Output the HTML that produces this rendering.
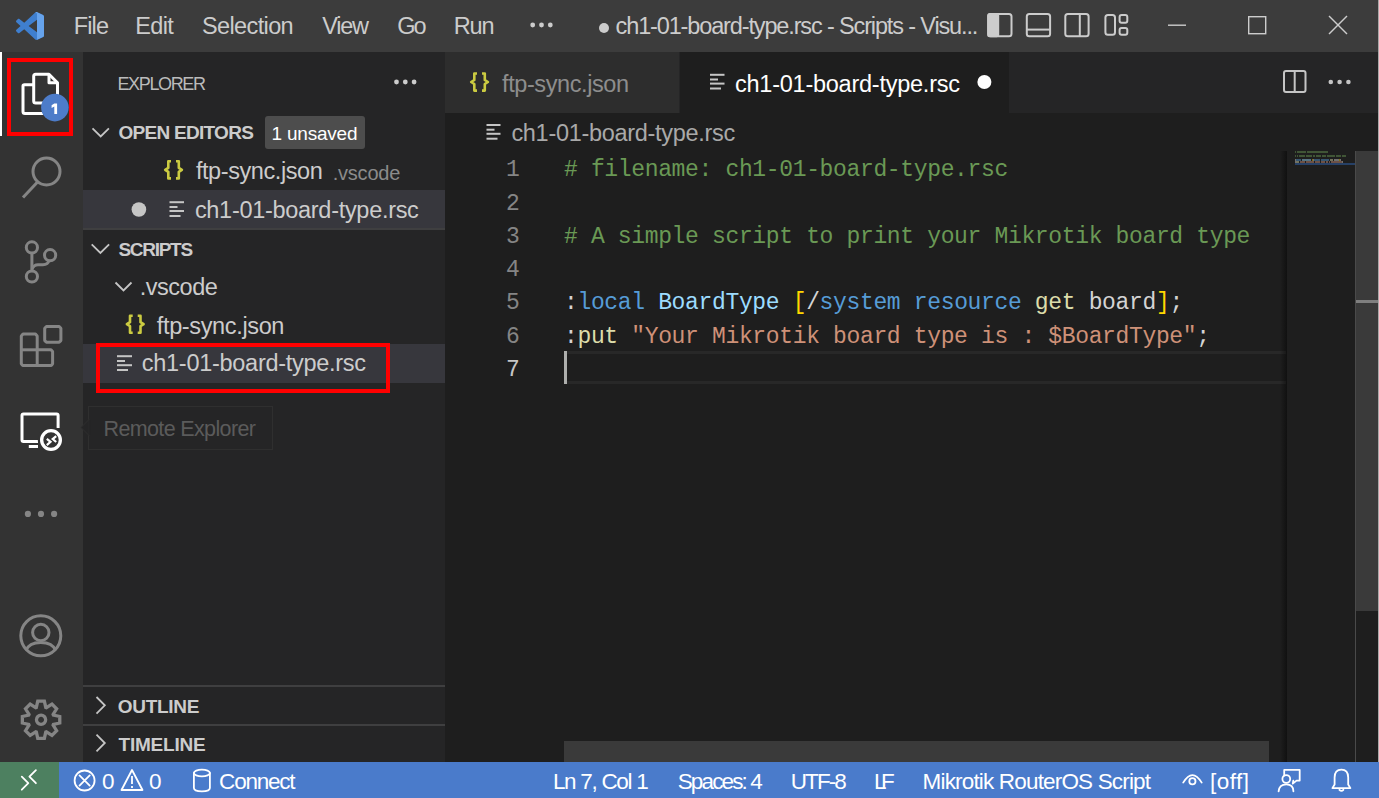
<!DOCTYPE html>
<html><head><meta charset="utf-8">
<style>
html,body{margin:0;padding:0;width:1379px;height:798px;overflow:hidden;background:#1e1e1e;font-family:"Liberation Sans",sans-serif}
.a{position:absolute}
.t{position:absolute;line-height:0;white-space:pre}
svg{position:absolute;overflow:visible}
</style></head><body>
<!-- title bar -->
<div class="a" style="left:0;top:0;width:1379px;height:52px;background:#3c3c3c"></div>
<!-- activity bar -->
<div class="a" style="left:0;top:52px;width:83px;height:710px;background:#333333"></div>
<!-- sidebar -->
<div class="a" style="left:83px;top:52px;width:362px;height:710px;background:#252526"></div>
<!-- tabs bar -->
<div class="a" style="left:445px;top:52px;width:934px;height:61px;background:#252526"></div>
<div class="a" style="left:445px;top:52px;width:234px;height:61px;background:#2d2d2d"></div>
<div class="a" style="left:680px;top:52px;width:329px;height:61px;background:#1e1e1e"></div>
<!-- editor -->
<div class="a" style="left:445px;top:113px;width:934px;height:649px;background:#1e1e1e"></div>
<!-- status bar -->
<div class="a" style="left:0;top:762px;width:1379px;height:36px;background:#4a7bcb"></div>
<div class="a" style="left:0;top:762px;width:59px;height:36px;background:#4d8060"></div>

<!-- sidebar selected rows -->
<div class="a" style="left:83px;top:190px;width:362px;height:38px;background:#37373d"></div>
<div class="a" style="left:83px;top:344px;width:362px;height:39px;background:#37373d"></div>
<!-- badge 1 unsaved -->
<div class="a" style="left:265px;top:116px;width:100px;height:33px;background:#4d4d4d;border-radius:3px"></div>
<!-- section borders -->
<div class="a" style="left:83px;top:685px;width:362px;height:2px;background:#3f3f40"></div>
<div class="a" style="left:83px;top:228px;width:362px;height:2px;background:#3f3f40"></div>
<div class="a" style="left:83px;top:724px;width:362px;height:2px;background:#3f3f40"></div>

<!-- current line highlight -->
<div class="a" style="left:564px;top:351px;width:722px;height:27px;border-top:3px solid #282828;border-bottom:3px solid #282828"></div>
<!-- cursor -->
<div class="a" style="left:564px;top:351px;width:3px;height:33px;background:#aeafad"></div>

<!-- minimap shadow -->
<div class="a" style="left:1280px;top:151px;width:7px;height:611px;background:linear-gradient(to right,rgba(0,0,0,0),rgba(0,0,0,0.45))"></div>
<!-- vertical scrollbar -->
<div class="a" style="left:1355px;top:151px;width:1px;height:611px;background:#4a4a4a"></div>
<div class="a" style="left:1356px;top:151px;width:22px;height:460px;background:#3a3a3a"></div>
<div class="a" style="left:1356px;top:300px;width:22px;height:3px;background:#7f7f7f"></div>
<!-- horizontal scrollbar -->
<div class="a" style="left:564px;top:741px;width:705px;height:21px;background:#3a3a3a"></div>
<!-- minimap content -->
<div class="a" style="left:1295px;top:163px;width:60px;height:2px;background:#264066"></div>
<div class="a" style="left:1295px;top:151px;width:1px;height:1.6px;background:#6a9955;opacity:0.45"></div>
<div class="a" style="left:1297px;top:151px;width:9px;height:1.6px;background:#6a9955;opacity:0.45"></div>
<div class="a" style="left:1307px;top:151px;width:21px;height:1.6px;background:#6a9955;opacity:0.45"></div>
<div class="a" style="left:1295px;top:155px;width:1px;height:1.6px;background:#6a9955;opacity:0.45"></div>
<div class="a" style="left:1297px;top:155px;width:1px;height:1.6px;background:#6a9955;opacity:0.45"></div>
<div class="a" style="left:1299px;top:155px;width:6px;height:1.6px;background:#6a9955;opacity:0.45"></div>
<div class="a" style="left:1306px;top:155px;width:6px;height:1.6px;background:#6a9955;opacity:0.45"></div>
<div class="a" style="left:1313px;top:155px;width:2px;height:1.6px;background:#6a9955;opacity:0.45"></div>
<div class="a" style="left:1316px;top:155px;width:5px;height:1.6px;background:#6a9955;opacity:0.45"></div>
<div class="a" style="left:1322px;top:155px;width:4px;height:1.6px;background:#6a9955;opacity:0.45"></div>
<div class="a" style="left:1327px;top:155px;width:8px;height:1.6px;background:#6a9955;opacity:0.45"></div>
<div class="a" style="left:1336px;top:155px;width:5px;height:1.6px;background:#6a9955;opacity:0.45"></div>
<div class="a" style="left:1342px;top:155px;width:4px;height:1.6px;background:#6a9955;opacity:0.45"></div>
<div class="a" style="left:1295px;top:159px;width:1px;height:1.6px;background:#d4d4d4;opacity:0.45"></div>
<div class="a" style="left:1296px;top:159px;width:5px;height:1.6px;background:#569cd6;opacity:0.45"></div>
<div class="a" style="left:1302px;top:159px;width:9px;height:1.6px;background:#9cdcfe;opacity:0.45"></div>
<div class="a" style="left:1312px;top:159px;width:1px;height:1.6px;background:#ffd700;opacity:0.45"></div>
<div class="a" style="left:1313px;top:159px;width:1px;height:1.6px;background:#d4d4d4;opacity:0.45"></div>
<div class="a" style="left:1314px;top:159px;width:6px;height:1.6px;background:#569cd6;opacity:0.45"></div>
<div class="a" style="left:1321px;top:159px;width:8px;height:1.6px;background:#569cd6;opacity:0.45"></div>
<div class="a" style="left:1330px;top:159px;width:3px;height:1.6px;background:#dcdcaa;opacity:0.45"></div>
<div class="a" style="left:1334px;top:159px;width:5px;height:1.6px;background:#d4d4d4;opacity:0.45"></div>
<div class="a" style="left:1339px;top:159px;width:1px;height:1.6px;background:#ffd700;opacity:0.45"></div>
<div class="a" style="left:1340px;top:159px;width:1px;height:1.6px;background:#d4d4d4;opacity:0.45"></div>
<div class="a" style="left:1295px;top:161px;width:1px;height:1.6px;background:#d4d4d4;opacity:0.45"></div>
<div class="a" style="left:1296px;top:161px;width:3px;height:1.6px;background:#dcdcaa;opacity:0.45"></div>
<div class="a" style="left:1300px;top:161px;width:5px;height:1.6px;background:#ce9178;opacity:0.45"></div>
<div class="a" style="left:1306px;top:161px;width:8px;height:1.6px;background:#ce9178;opacity:0.45"></div>
<div class="a" style="left:1315px;top:161px;width:5px;height:1.6px;background:#ce9178;opacity:0.45"></div>
<div class="a" style="left:1321px;top:161px;width:4px;height:1.6px;background:#ce9178;opacity:0.45"></div>
<div class="a" style="left:1326px;top:161px;width:2px;height:1.6px;background:#ce9178;opacity:0.45"></div>
<div class="a" style="left:1329px;top:161px;width:1px;height:1.6px;background:#ce9178;opacity:0.45"></div>
<div class="a" style="left:1331px;top:161px;width:11px;height:1.6px;background:#ce9178;opacity:0.45"></div>
<div class="a" style="left:1342px;top:161px;width:1px;height:1.6px;background:#d4d4d4;opacity:0.45"></div>
<!-- tooltip -->
<div class="a" style="left:88px;top:406px;width:183px;height:42px;border:1px solid #2f2f2f;background:#252526"></div>
<svg style="left:0;top:0" width="1379" height="798"><path d="M81 427.5 L89 419.5 L89 435.5 Z" fill="#252526" stroke="#2f2f2f" stroke-width="1"/><path d="M89.5 420 L89.5 435" stroke="#252526" stroke-width="1.5"/></svg>

<div class="a" style="left:1378px;top:0;width:1px;height:762px;background:#a8a8a8"></div>
<!-- ===== ICONS ===== -->
<svg style="left:0;top:0" width="1379" height="798">
  <!-- vscode logo -->
  <g transform="translate(16,12) scale(0.28)">
    <path fill="#3f7fcf" fill-rule="evenodd" d="M70.9 99.3c1.6.6 3.4.6 5-.2l20.6-9.9c2.2-1 3.5-3.2 3.5-5.6V16.4c0-2.4-1.4-4.6-3.5-5.6L75.9.9c-2.1-1-4.5-.8-6.4.6-.3.2-.5.4-.7.6L29.4 38 12.2 25c-1.6-1.2-3.8-1.1-5.3.2l-5.5 5c-1.8 1.7-1.8 4.5 0 6.2L16.2 50 1.4 63.6c-1.8 1.7-1.8 4.5 0 6.2l5.5 5c1.5 1.4 3.7 1.5 5.3.2l17.2-13 39.4 35.9c.6.6 1.4 1.1 2.1 1.4zM75 27.3 45.1 50 75 72.7V27.3z"/>
    <path fill="#6aa7ee" d="M75.9 99.1 96.5 89.2c2.2-1 3.5-3.2 3.5-5.6V16.4c0-2.4-1.4-4.6-3.5-5.6L75.9.9c-2.1-1-4.5-.8-6.4.6L75 5v90z" opacity="0.9"/>
  </g>
  <!-- menu more -->
  <g fill="#cccccc"><circle cx="532.7" cy="25" r="2.4"/><circle cx="541.5" cy="25" r="2.4"/><circle cx="550.3" cy="25" r="2.4"/></g>
  <!-- title dirty dot -->
  <circle cx="604" cy="28" r="5" fill="#cccccc"/>
  <!-- layout icons -->
  <g fill="none" stroke="#cccccc" stroke-width="2">
    <rect x="988.2" y="13.9" width="23.3" height="22.4" rx="2.5"/>
    <rect x="988.2" y="13.9" width="10" height="22.4" rx="1.5" fill="#cccccc"/>
    <rect x="1026.8" y="13.9" width="23.3" height="22.4" rx="2.5"/>
    <line x1="1027" y1="29.6" x2="1050" y2="29.6"/>
    <rect x="1065.3" y="13.9" width="23.3" height="22.4" rx="2.5"/>
    <line x1="1079.8" y1="14" x2="1079.8" y2="36"/>
    <rect x="1105.4" y="15" width="9.6" height="19.7" rx="2.5"/>
    <rect x="1119.6" y="15" width="7.7" height="7.8" rx="2"/>
    <rect x="1119.6" y="27.9" width="7.7" height="6.8" rx="2"/>
  </g>
  <!-- window controls -->
  <g fill="none" stroke="#cccccc" stroke-width="1.4">
    <line x1="1168" y1="25.2" x2="1186" y2="25.2"/>
    <rect x="1248.7" y="16.7" width="17" height="17"/>
    <line x1="1329" y1="16" x2="1347" y2="34"/>
    <line x1="1347" y1="16" x2="1329" y2="34"/>
  </g>
  <!-- right edge strip -->
  <!-- activity bar: active indicator -->
  <rect x="0" y="52" width="2" height="84" fill="#ffffff"/>
  <!-- files icon -->
  <g fill="none" stroke="#ffffff" stroke-width="3" stroke-linejoin="round">
    <path d="M23 86 Q23 84.7 24.5 84.7 L33.7 84.7 M23 86 L23 111.5 Q23 113.5 25 113.5 L43 113.5"/>
    <path d="M35.7 74.3 L49 74.3 L57.5 82.8 L57.5 101 Q57.5 103 55.5 103 L35.7 103 Q33.7 103 33.7 101 L33.7 76.3 Q33.7 74.3 35.7 74.3 Z"/>
    <path d="M49 74.3 L49 82.8 L57.5 82.8"/>
  </g>
  <circle cx="54.9" cy="107.6" r="13.8" fill="#4d7cc9"/>
  <path d="M54.3 103.4 L57.1 103.4 L57.1 113.9 L54.3 113.9 L54.3 106.6 L51.6 107.9 L51.6 105.3 Z" fill="#ffffff"/>
  <!-- red box explorer -->
  <rect x="9" y="60" width="62" height="74" fill="none" stroke="#ff0000" stroke-width="4"/>
  <!-- search -->
  <g fill="none" stroke="#858585" stroke-width="3">
    <circle cx="46.5" cy="171.5" r="13.5"/>
    <line x1="37.5" y1="182" x2="23" y2="197.5"/>
  </g>
  <!-- scm -->
  <g fill="none" stroke="#858585" stroke-width="3">
    <circle cx="31.9" cy="247.4" r="5.6"/>
    <circle cx="31.9" cy="276.5" r="5.6"/>
    <circle cx="50.1" cy="255.2" r="5.6"/>
    <line x1="31.9" y1="253" x2="31.9" y2="271"/>
    <path d="M31.9 269 Q34 264.7 38 264.7 L43 264.7 Q48 264.7 49 260.5"/>
  </g>
  <!-- extensions -->
  <g fill="none" stroke="#858585" stroke-width="3" stroke-linejoin="bevel">
    <path d="M21.3 336 L23 334.1 L35.5 334.1 L37.2 336 L37.2 349.8 L51 349.8 L52.6 351.5 L52.6 364 L51 365.6 L23 365.6 L21.3 364 Z"/>
    <line x1="21.3" y1="349.8" x2="37.2" y2="349.8"/>
    <line x1="37.2" y1="349.8" x2="37.2" y2="365.6"/>
    <path d="M44.7 328.2 L46.4 326.5 L59.2 326.5 L60.9 328.2 L60.9 340.6 L59.2 342.2 L46.4 342.2 L44.7 340.6 Z"/>
  </g>
  <!-- remote explorer -->
  <g fill="none" stroke="#ffffff" stroke-width="3">
    <path d="M38.5 441.4 L23.5 441.4 Q22 441.4 22 440 L22 415.4 Q22 413.9 23.5 413.9 L56.6 413.9 Q58.1 413.9 58.1 415.4 L58.1 428"/>
    <line x1="28.8" y1="446.5" x2="38" y2="446.5"/>
  </g>
  <circle cx="51" cy="440" r="13.2" fill="#333333"/>
  <circle cx="51" cy="440" r="9.35" fill="none" stroke="#ffffff" stroke-width="3.3"/>
  <g fill="none" stroke="#ffffff" stroke-width="2.2">
    <path d="M46.8 438.9 L50.5 441.9 L46.8 445.1"/>
    <path d="M56.2 436.1 L52.7 439.1 L56.2 442"/>
  </g>
  <!-- more dots -->
  <g fill="#858585"><circle cx="27.9" cy="513.9" r="3.1"/><circle cx="41" cy="513.9" r="3.1"/><circle cx="54.1" cy="513.9" r="3.1"/></g>
  <!-- account -->
  <g fill="none" stroke="#858585" stroke-width="3">
    <circle cx="40.8" cy="635.8" r="20"/>
    <circle cx="40.8" cy="632.5" r="8.2"/>
    <path d="M26 650.5 Q29 642.5 40.8 642.5 Q52.6 642.5 55.6 650.5"/>
  </g>
  <!-- gear -->
  <g transform="translate(41.06,719.75)" fill="none" stroke="#858585" stroke-width="3.3" stroke-linejoin="miter">
    <path d="M-4.73 -12.32 L-3.30 -18.71 L3.30 -18.71 L4.73 -12.32 L5.37 -12.06 L10.90 -15.56 L15.56 -10.90 L12.06 -5.37 L12.32 -4.73 L18.71 -3.30 L18.71 3.30 L12.32 4.73 L12.06 5.37 L15.56 10.90 L10.90 15.56 L5.37 12.06 L4.73 12.32 L3.30 18.71 L-3.30 18.71 L-4.73 12.32 L-5.37 12.06 L-10.90 15.56 L-15.56 10.90 L-12.06 5.37 L-12.32 4.73 L-18.71 3.30 L-18.71 -3.30 L-12.32 -4.73 L-12.06 -5.37 L-15.56 -10.90 L-10.90 -15.56 L-5.37 -12.06 Z"/>
    <circle cx="0" cy="0" r="4.6"/>
  </g>

  <!-- sidebar: explorer more -->
  <g fill="#cccccc"><circle cx="396.5" cy="82" r="2.4"/><circle cx="405.3" cy="82" r="2.4"/><circle cx="414.1" cy="82" r="2.4"/></g>
  <!-- chevrons -->
  <g fill="none" stroke="#c5c5c5" stroke-width="1.8">
    <path d="M92.5 128.3 L100.7 136.5 L108.9 128.3"/>
    <path d="M91.7 244.3 L100.4 253 L109.1 244.3"/>
    <path d="M115.5 282.5 L123.5 290.5 L131.5 282.5"/>
    <path d="M96.5 697 L104.8 705.3 L96.5 713.6"/>
    <path d="M96.5 734.7 L104.8 743 L96.5 751.3"/>
  </g>
  <!-- json brace icons -->
  <defs><g id="br" fill="none" stroke="#cbcb41" stroke-width="2.6" stroke-linejoin="round">
    <path d="M171 161.3 L168.3 161.3 L168.3 167.8 L165.2 169.8 L168.3 171.8 L168.3 178.4 L171 178.4"/>
    <path d="M176 161.3 L178.8 161.3 L178.8 167.8 L181.9 169.8 L178.8 171.8 L178.8 178.4 L176 178.4"/>
  </g></defs>
  <use href="#br"/>
  <use href="#br" transform="translate(-38.3,154.4)"/>
  <use href="#br" transform="translate(306,-87.8)"/>
  <!-- dirty dot in open editors -->
  <circle cx="138.9" cy="209.5" r="7.3" fill="#c5c5c5"/>
  <!-- lines icons -->
  <g fill="#c5c5c5">
    <rect x="169.5" y="201.2" width="14.5" height="2"/><rect x="169.5" y="206" width="8" height="2"/><rect x="169.5" y="210" width="14.5" height="2"/><rect x="169.5" y="215" width="11" height="2"/>
    <rect x="117" y="355.2" width="15" height="2"/><rect x="117" y="360" width="8" height="2"/><rect x="117" y="364.2" width="15" height="2"/><rect x="117" y="369" width="11" height="2"/>
    <rect x="486.5" y="124" width="14" height="2"/><rect x="486.5" y="128.7" width="8" height="2"/><rect x="486.5" y="132.8" width="14" height="2"/><rect x="486.5" y="137.7" width="11" height="2"/>
  </g>
  <g fill="#c5c5c5">
    <rect x="710" y="73.8" width="14.5" height="2"/><rect x="710" y="78.5" width="8" height="2"/><rect x="710" y="82.6" width="14.5" height="2"/><rect x="710" y="87.5" width="11" height="2"/>
  </g>
  <!-- red box scripts -->
  <rect x="98" y="345" width="290" height="46" fill="none" stroke="#ff0000" stroke-width="4"/>
  <!-- tab dirty dot -->
  <circle cx="984.4" cy="82" r="7" fill="#ffffff"/>
  <!-- split editor / more -->
  <g fill="none" stroke="#c5c5c5" stroke-width="2">
    <rect x="1284" y="71" width="21.5" height="21" rx="2"/>
    <line x1="1294.7" y1="71" x2="1294.7" y2="92"/>
  </g>
  <g fill="#c5c5c5"><circle cx="1330.8" cy="82" r="2.3"/><circle cx="1339.6" cy="82" r="2.3"/><circle cx="1348.4" cy="82" r="2.3"/></g>

  <!-- status bar icons -->
  <g fill="none" stroke="#ffffff" stroke-width="1.8" stroke-linecap="round" stroke-linejoin="round">
    <path d="M21.8 776.6 L28.3 783.2 L21.8 789.7"/>
    <path d="M35.9 770.2 L29.4 776.7 L35.9 783.2"/>
    <circle cx="84.6" cy="780.5" r="10"/>
    <path d="M79.5 775.4 L89.7 785.6 M89.7 775.4 L79.5 785.6"/>
    <path d="M132 770 L142.5 790 L121.5 790 Z"/>
    <ellipse cx="201.9" cy="773" rx="8" ry="3.3"/>
    <path d="M193.9 773 L193.9 788 Q193.9 791.3 201.9 791.3 Q209.9 791.3 209.9 788 L209.9 773"/>
    <path d="M1183.2 782.6 Q1192.4 767.5 1201.7 782.6"/>
    <circle cx="1192.4" cy="781.2" r="3.1"/>
    <path d="M1284.2 775.5 L1284.2 769.9 L1299.7 769.9 L1299.7 780.6 L1296.5 780.6 L1292.8 783.6 L1293.3 780.6"/>
    <circle cx="1286.3" cy="779" r="3.9"/>
    <path d="M1278.6 791.3 Q1279.2 784.3 1286.3 784.3 Q1293.4 784.3 1293.4 791.3"/>
    <path d="M1332.4 788.1 L1350.4 788.1 L1348.2 784.5 L1348.2 777.5 Q1348.2 769.6 1341.4 769.6 Q1334.6 769.6 1334.6 777.5 L1334.6 784.5 Z"/>
    <path d="M1339.4 789.8 Q1341.4 792 1343.4 789.8"/>
  </g>
  <g fill="#ffffff">
    <rect x="131.1" y="776" width="1.8" height="8"/>
    <rect x="131.1" y="786" width="1.8" height="2"/>
  </g>
</svg>

<div class="t" style="left:73.70px;top:26.46px;font-family:'Liberation Sans';font-size:23.5px;font-weight:400;color:#cccccc;letter-spacing:-0.833px;">File</div>
<div class="t" style="left:135.30px;top:26.46px;font-family:'Liberation Sans';font-size:23.5px;font-weight:400;color:#cccccc;letter-spacing:-0.633px;">Edit</div>
<div class="t" style="left:202.00px;top:26.46px;font-family:'Liberation Sans';font-size:23.5px;font-weight:400;color:#cccccc;letter-spacing:-0.625px;">Selection</div>
<div class="t" style="left:322.20px;top:26.46px;font-family:'Liberation Sans';font-size:23.5px;font-weight:400;color:#cccccc;letter-spacing:-1.233px;">View</div>
<div class="t" style="left:397.30px;top:26.46px;font-family:'Liberation Sans';font-size:23.5px;font-weight:400;color:#cccccc;letter-spacing:-2.000px;">Go</div>
<div class="t" style="left:453.80px;top:26.46px;font-family:'Liberation Sans';font-size:23.5px;font-weight:400;color:#cccccc;letter-spacing:-1.200px;">Run</div>
<div class="t" style="left:615.60px;top:26.46px;font-family:'Liberation Sans';font-size:23.5px;font-weight:400;color:#cccccc;letter-spacing:-1.140px;">ch1-01-board-type.rsc - Scripts - Visu...</div>
<div class="t" style="left:117.40px;top:84.36px;font-family:'Liberation Sans';font-size:18px;font-weight:400;color:#bbbbbb;letter-spacing:-1.343px;">EXPLORER</div>
<div class="t" style="left:118.40px;top:133.42px;font-family:'Liberation Sans';font-size:19px;font-weight:700;color:#cccccc;letter-spacing:-0.709px;">OPEN EDITORS</div>
<div class="t" style="left:271.50px;top:133.62px;font-family:'Liberation Sans';font-size:19px;font-weight:400;color:#ffffff;letter-spacing:-0.212px;">1 unsaved</div>
<div class="t" style="left:195.90px;top:171.46px;font-family:'Liberation Sans';font-size:23.5px;font-weight:400;color:#cccccc;letter-spacing:-0.417px;">ftp-sync.json</div>
<div class="t" style="left:332.70px;top:172.67px;font-family:'Liberation Sans';font-size:20px;font-weight:400;color:#8b8b8b;letter-spacing:-0.217px;">.vscode</div>
<div class="t" style="left:194.90px;top:210.06px;font-family:'Liberation Sans';font-size:23.5px;font-weight:400;color:#cccccc;letter-spacing:-0.295px;">ch1-01-board-type.rsc</div>
<div class="t" style="left:118.40px;top:249.72px;font-family:'Liberation Sans';font-size:19px;font-weight:700;color:#cccccc;letter-spacing:-1.267px;">SCRIPTS</div>
<div class="t" style="left:139.80px;top:286.86px;font-family:'Liberation Sans';font-size:23.5px;font-weight:400;color:#cccccc;letter-spacing:-0.500px;">.vscode</div>
<div class="t" style="left:156.80px;top:325.86px;font-family:'Liberation Sans';font-size:23.5px;font-weight:400;color:#cccccc;letter-spacing:-0.358px;">ftp-sync.json</div>
<div class="t" style="left:141.80px;top:363.46px;font-family:'Liberation Sans';font-size:23.5px;font-weight:400;color:#cccccc;letter-spacing:-0.280px;">ch1-01-board-type.rsc</div>
<div class="t" style="left:103.50px;top:428.95px;font-family:'Liberation Sans';font-size:21.5px;font-weight:400;color:#5b5b5b;letter-spacing:-0.636px;">Remote Explorer</div>
<div class="t" style="left:117.80px;top:707.02px;font-family:'Liberation Sans';font-size:19px;font-weight:700;color:#cccccc;letter-spacing:-0.300px;">OUTLINE</div>
<div class="t" style="left:118.50px;top:744.72px;font-family:'Liberation Sans';font-size:19px;font-weight:700;color:#cccccc;letter-spacing:-0.214px;">TIMELINE</div>
<div class="t" style="left:502.00px;top:84.26px;font-family:'Liberation Sans';font-size:23.5px;font-weight:400;color:#8d8d8d;letter-spacing:-0.400px;">ftp-sync.json</div>
<div class="t" style="left:735.00px;top:84.46px;font-family:'Liberation Sans';font-size:23.5px;font-weight:400;color:#ffffff;letter-spacing:-0.245px;">ch1-01-board-type.rsc</div>
<div class="t" style="left:511.40px;top:132.56px;font-family:'Liberation Sans';font-size:23.5px;font-weight:400;color:#a9a9a9;letter-spacing:-0.300px;">ch1-01-board-type.rsc</div>
<div class="t" style="left:101.90px;top:782.40px;font-family:'Liberation Sans';font-size:22.5px;font-weight:400;color:#ffffff;letter-spacing:0.000px;">0</div>
<div class="t" style="left:149.00px;top:782.40px;font-family:'Liberation Sans';font-size:22.5px;font-weight:400;color:#ffffff;letter-spacing:0.000px;">0</div>
<div class="t" style="left:219.10px;top:782.40px;font-family:'Liberation Sans';font-size:22.5px;font-weight:400;color:#ffffff;letter-spacing:-1.217px;">Connect</div>
<div class="t" style="left:552.90px;top:782.40px;font-family:'Liberation Sans';font-size:22.5px;font-weight:400;color:#ffffff;letter-spacing:-1.300px;">Ln 7, Col 1</div>
<div class="t" style="left:677.70px;top:782.40px;font-family:'Liberation Sans';font-size:22.5px;font-weight:400;color:#ffffff;letter-spacing:-1.863px;">Spaces: 4</div>
<div class="t" style="left:790.80px;top:782.40px;font-family:'Liberation Sans';font-size:22.5px;font-weight:400;color:#ffffff;letter-spacing:-1.950px;">UTF-8</div>
<div class="t" style="left:874.00px;top:782.40px;font-family:'Liberation Sans';font-size:22.5px;font-weight:400;color:#ffffff;letter-spacing:-5.500px;">LF</div>
<div class="t" style="left:922.60px;top:782.40px;font-family:'Liberation Sans';font-size:22.5px;font-weight:400;color:#ffffff;letter-spacing:-0.830px;">Mikrotik RouterOS Script</div>
<div class="t" style="left:1210.00px;top:782.40px;font-family:'Liberation Sans';font-size:22.5px;font-weight:400;color:#ffffff;letter-spacing:0.450px;">[off]</div>
<div class="t" style="left:564px;top:170.28px;font-family:'Liberation Mono';font-size:23px;letter-spacing:-0.350px"><span style="color:#6a9955"># filename: ch1-01-board-type.rsc</span></div>
<div class="t" style="left:506.00px;top:170.28px;font-family:'Liberation Mono';font-size:23px;color:#858585">1</div>
<div class="t" style="left:564px;top:203.53px;font-family:'Liberation Mono';font-size:23px;letter-spacing:-0.350px"></div>
<div class="t" style="left:506.00px;top:203.53px;font-family:'Liberation Mono';font-size:23px;color:#858585">2</div>
<div class="t" style="left:564px;top:236.78px;font-family:'Liberation Mono';font-size:23px;letter-spacing:-0.350px"><span style="color:#6a9955"># A simple script to print your Mikrotik board type</span></div>
<div class="t" style="left:506.00px;top:236.78px;font-family:'Liberation Mono';font-size:23px;color:#858585">3</div>
<div class="t" style="left:564px;top:270.03px;font-family:'Liberation Mono';font-size:23px;letter-spacing:-0.350px"></div>
<div class="t" style="left:506.00px;top:270.03px;font-family:'Liberation Mono';font-size:23px;color:#858585">4</div>
<div class="t" style="left:564px;top:303.28px;font-family:'Liberation Mono';font-size:23px;letter-spacing:-0.350px"><span style="color:#d4d4d4">:</span><span style="color:#569cd6">local</span><span style="color:#d4d4d4"> </span><span style="color:#9cdcfe">BoardType</span><span style="color:#d4d4d4"> </span><span style="color:#ffd700">[</span><span style="color:#d4d4d4">/</span><span style="color:#569cd6">system</span><span style="color:#d4d4d4"> </span><span style="color:#569cd6">resource</span><span style="color:#d4d4d4"> </span><span style="color:#dcdcaa">get</span><span style="color:#d4d4d4"> board</span><span style="color:#ffd700">]</span><span style="color:#d4d4d4">;</span></div>
<div class="t" style="left:506.00px;top:303.28px;font-family:'Liberation Mono';font-size:23px;color:#858585">5</div>
<div class="t" style="left:564px;top:336.53px;font-family:'Liberation Mono';font-size:23px;letter-spacing:-0.350px"><span style="color:#d4d4d4">:</span><span style="color:#dcdcaa">put</span><span style="color:#d4d4d4"> </span><span style="color:#ce9178">"Your Mikrotik board type is : $BoardType"</span><span style="color:#d4d4d4">;</span></div>
<div class="t" style="left:506.00px;top:336.53px;font-family:'Liberation Mono';font-size:23px;color:#858585">6</div>
<div class="t" style="left:564px;top:369.78px;font-family:'Liberation Mono';font-size:23px;letter-spacing:-0.350px"></div>
<div class="t" style="left:506.00px;top:369.78px;font-family:'Liberation Mono';font-size:23px;color:#c6c6c6">7</div>

</body></html>
